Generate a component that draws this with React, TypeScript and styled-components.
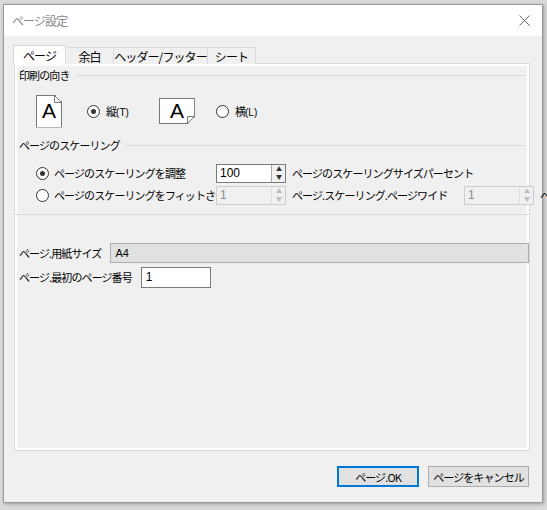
import * as React from 'react';
import styled, { createGlobalStyle } from 'styled-components';

const Global = createGlobalStyle`
  body {
    margin: 0;
    background: #c8c8c8;
    font-family: "Noto Sans CJK JP", "Liberation Sans", sans-serif;
    font-size: 11px;
    letter-spacing: -0.9px;
    color: #000;
  }
`;

const Screen = styled.div`
  width: 547px;
  height: 510px;
  background: #d9d9d9;
  padding: 4px 0 0 3px;
  box-sizing: border-box;
`;

const Window = styled.div`
  width: 540px;
  height: 499px;
  background: #f0f0f0;
  border: 1px solid #9a9a9a;
  box-sizing: border-box;
  display: flex;
  flex-direction: column;
  box-shadow: 1px 1px 3px rgba(0, 0, 0, 0.3);
`;

const TitleBar = styled.div`
  height: 31px;
  background: #fff;
  display: flex;
  align-items: center;
  justify-content: space-between;
  padding: 0 12px 0 8px;
  color: #888;
  font-size: 12px;
`;

const Body = styled.div`
  flex: 1;
  padding: 9px 10px 0 10px;
  display: flex;
  flex-direction: column;
`;

const Tabs = styled.div`
  display: flex;
  height: 19px;
  align-items: flex-end;
`;

const Tab = styled.div<{ $w: number; $active?: boolean }>`
  height: ${(p) => (p.$active ? 19 : 17)}px;
  width: ${(p) => p.$w}px;
  border: 1px solid #d9d9d9;
  border-bottom: none;
  background: ${(p) => (p.$active ? '#fff' : '#f0f0f0')};
  box-sizing: border-box;
  display: flex;
  align-items: center;
  justify-content: center;
  margin-left: -1px;
  position: relative;
  z-index: ${(p) => (p.$active ? 1 : 0)};
  font-size: 12px;
`;

const Panel = styled.div`
  width: 516px;
  height: 388px;
  border: 1px solid #d9d9d9;
  box-shadow: inset 0 0 0 1px #fff, inset 0 0 0 2px #fff;
  box-sizing: border-box;
  margin-top: -1px;
  padding: 3px 4px;
  display: flex;
  flex-direction: column;
`;

const GroupHead = styled.div`
  display: flex;
  align-items: center;
  gap: 6px;
  height: 16px;
  &::after {
    content: '';
    flex: 1;
    border-top: 1px solid #d6d6d6;
  }
`;

const OrientRow = styled.div`
  display: flex;
  align-items: center;
  height: 48px;
  margin-top: 4px;
  padding-left: 17px;
`;

const PageIcon = styled.div<{ $w: number; $h: number }>`
  width: ${(p) => p.$w}px;
  height: ${(p) => p.$h}px;
  position: relative;
  border: 1px solid #777;
  background: #fff;
  box-sizing: border-box;
  display: flex;
  align-items: center;
  justify-content: center;
  font-family: "Liberation Sans", sans-serif;
  font-size: 21px;
  letter-spacing: 0;
  clip-path: polygon(0 0, calc(100% - 7px) 0, 100% 7px, 100% 100%, 0 100%);
`;

const Dog = styled.svg`
  position: absolute;
  right: -1px;
  top: -1px;
`;

const LandIcon = styled(PageIcon)`
  clip-path: polygon(0 0, 100% 0, 100% calc(100% - 7px), calc(100% - 7px) 100%, 0 100%);
`;

const LandDog = styled.svg`
  position: absolute;
  right: -1px;
  bottom: -1px;
`;

const Radio = styled.span<{ $on?: boolean }>`
  width: 11px;
  height: 11px;
  border: 1px solid #333;
  border-radius: 50%;
  background: #fff;
  display: inline-flex;
  align-items: center;
  justify-content: center;
  flex: none;
  &::after {
    content: '';
    width: 5px;
    height: 5px;
    border-radius: 50%;
    background: ${(p) => (p.$on ? '#333' : 'transparent')};
  }
`;

const RadioLabel = styled.label<{ $ml: number }>`
  display: flex;
  align-items: center;
  gap: 6px;
  margin-left: ${(p) => p.$ml}px;
`;

const Key = styled.span`
  font-family: "Liberation Sans", sans-serif;
  font-size: 10px;
  letter-spacing: 0;
`;

const ScaleRow = styled.div`
  display: flex;
  align-items: center;
  height: 22px;
  padding-left: 17px;
`;

const RadioCol = styled.label`
  display: flex;
  align-items: center;
  gap: 5px;
  width: 180px;
  white-space: nowrap;
  flex: none;
`;

const Spin = styled.div<{ $off?: boolean }>`
  display: flex;
  height: 19px;
  border: 1px solid ${(p) => (p.$off ? '#ccc' : '#7a7a7a')};
  background: ${(p) => (p.$off ? '#f0f0f0' : '#fff')};
  box-sizing: border-box;
  color: ${(p) => (p.$off ? '#888' : '#000')};
  flex: none;
`;

const SpinText = styled.div`
  width: 51px;
  padding-left: 3px;
  line-height: 17px;
  font-family: "Liberation Sans", sans-serif;
  font-size: 12px;
  letter-spacing: 0;
`;

const SpinBtns = styled.div<{ $off?: boolean }>`
  width: 13px;
  display: flex;
  flex-direction: column;
  border-left: 1px solid ${(p) => (p.$off ? '#ddd' : '#aaa')};
  background: #f0f0f0;
  color: ${(p) => (p.$off ? '#bbb' : '#333')};
  font-size: 6px;
  line-height: 8px;
  text-align: center;
`;

const After = styled.span<{ $w?: number }>`
  margin-left: 6px;
  white-space: nowrap;
  overflow: hidden;
  flex: none;
  width: ${(p) => (p.$w ? `${p.$w}px` : 'auto')};
`;

const Divider = styled.div`
  border-top: 1px solid #d6d6d6;
  margin: 8px -4px 0;
`;

const FieldRow = styled.div`
  display: flex;
  align-items: center;
  gap: 9px;
  height: 24px;
`;

const Grey = styled.div`
  flex: 1;
  height: 20px;
  background: #e1e1e1;
  border: 1px solid #adadad;
  box-sizing: border-box;
  padding-left: 4px;
  line-height: 18px;
  margin-right: -4px;
  font-family: "Liberation Sans", sans-serif;
  letter-spacing: 0;
`;

const Input = styled.div`
  width: 70px;
  height: 21px;
  border: 1px solid #7a7a7a;
  background: #fff;
  box-sizing: border-box;
  padding-left: 4px;
  line-height: 19px;
  font-family: "Liberation Sans", sans-serif;
  font-size: 12px;
  letter-spacing: 0;
`;

const Footer = styled.div`
  display: flex;
  justify-content: flex-end;
  gap: 9px;
  padding: 15px 3px 0 0;
`;

const Button = styled.button<{ $w: number; $primary?: boolean }>`
  height: 21px;
  width: ${(p) => p.$w}px;
  padding: 0;
  background: #e1e1e1;
  border: ${(p) => (p.$primary ? '2px solid #0078d7' : '1px solid #adadad')};
  font-family: inherit;
  font-size: 11px;
  letter-spacing: -0.9px;
  color: #000;
`;

const Spinner = ({ value, off }: { value: string; off?: boolean }) => (
  <Spin $off={off}>
    <SpinText>{value}</SpinText>
    <SpinBtns $off={off}>
      <span>▲</span>
      <span>▼</span>
    </SpinBtns>
  </Spin>
);

export default function App() {
  return (
    <Screen>
      <Global />
      <Window>
        <TitleBar>
          <span>ページ設定</span>
          <svg width="11" height="11" viewBox="0 0 11 11">
            <path d="M0.5 0.5 L10.5 10.5 M10.5 0.5 L0.5 10.5" stroke="#666" strokeWidth="1" />
          </svg>
        </TitleBar>
        <Body>
          <Tabs>
            <Tab $w={53} $active>ページ</Tab>
            <Tab $w={49}>余白</Tab>
            <Tab $w={95}>ヘッダー/フッター</Tab>
            <Tab $w={49}>シート</Tab>
          </Tabs>
          <Panel>
            <GroupHead>印刷の向き</GroupHead>
            <OrientRow>
              <PageIcon $w={26} $h={33}>
                A
                <Dog width="8" height="8" viewBox="0 0 8 8">
                  <path d="M0.5 0 V7.5 H8" fill="none" stroke="#777" />
                  <path d="M0 0 L8 8" stroke="#777" />
                </Dog>
              </PageIcon>
              <RadioLabel $ml={25}>
                <Radio $on />
                <span>
                  縦<Key>(T)</Key>
                </span>
              </RadioLabel>
              <LandIcon $w={36} $h={26} style={{ marginLeft: 30 }}>
                A
                <LandDog width="8" height="8" viewBox="0 0 8 8">
                  <path d="M0.5 8 V0.5 H8" fill="none" stroke="#777" />
                  <path d="M0 8 L8 0" stroke="#777" />
                </LandDog>
              </LandIcon>
              <RadioLabel $ml={21}>
                <Radio />
                <span>
                  横<Key>(L)</Key>
                </span>
              </RadioLabel>
            </OrientRow>
            <GroupHead style={{ marginTop: 2 }}>ページのスケーリング</GroupHead>
            <div style={{ height: 9 }} />
            <ScaleRow>
              <RadioCol>
                <Radio $on />
                ページのスケーリングを調整
              </RadioCol>
              <Spinner value="100" />
              <After>ページのスケーリングサイズパーセント</After>
            </ScaleRow>
            <ScaleRow>
              <RadioCol>
                <Radio />
                ページのスケーリングをフィットさせる
              </RadioCol>
              <Spinner value="1" off />
              <After $w={172}>ページ.スケーリング.ページワイド</After>
              <Spinner value="1" off />
              <After>ペ</After>
            </ScaleRow>
            <Divider />
            <div style={{ height: 26 }} />
            <FieldRow>
              <span>ページ.用紙サイズ</span>
              <Grey>A4</Grey>
            </FieldRow>
            <FieldRow>
              <span>ページ.最初のページ番号</span>
              <Input>1</Input>
            </FieldRow>
          </Panel>
          <Footer>
            <Button $w={82} $primary>ページ.OK</Button>
            <Button $w={101}>ページをキャンセル</Button>
          </Footer>
        </Body>
      </Window>
    </Screen>
  );
}
